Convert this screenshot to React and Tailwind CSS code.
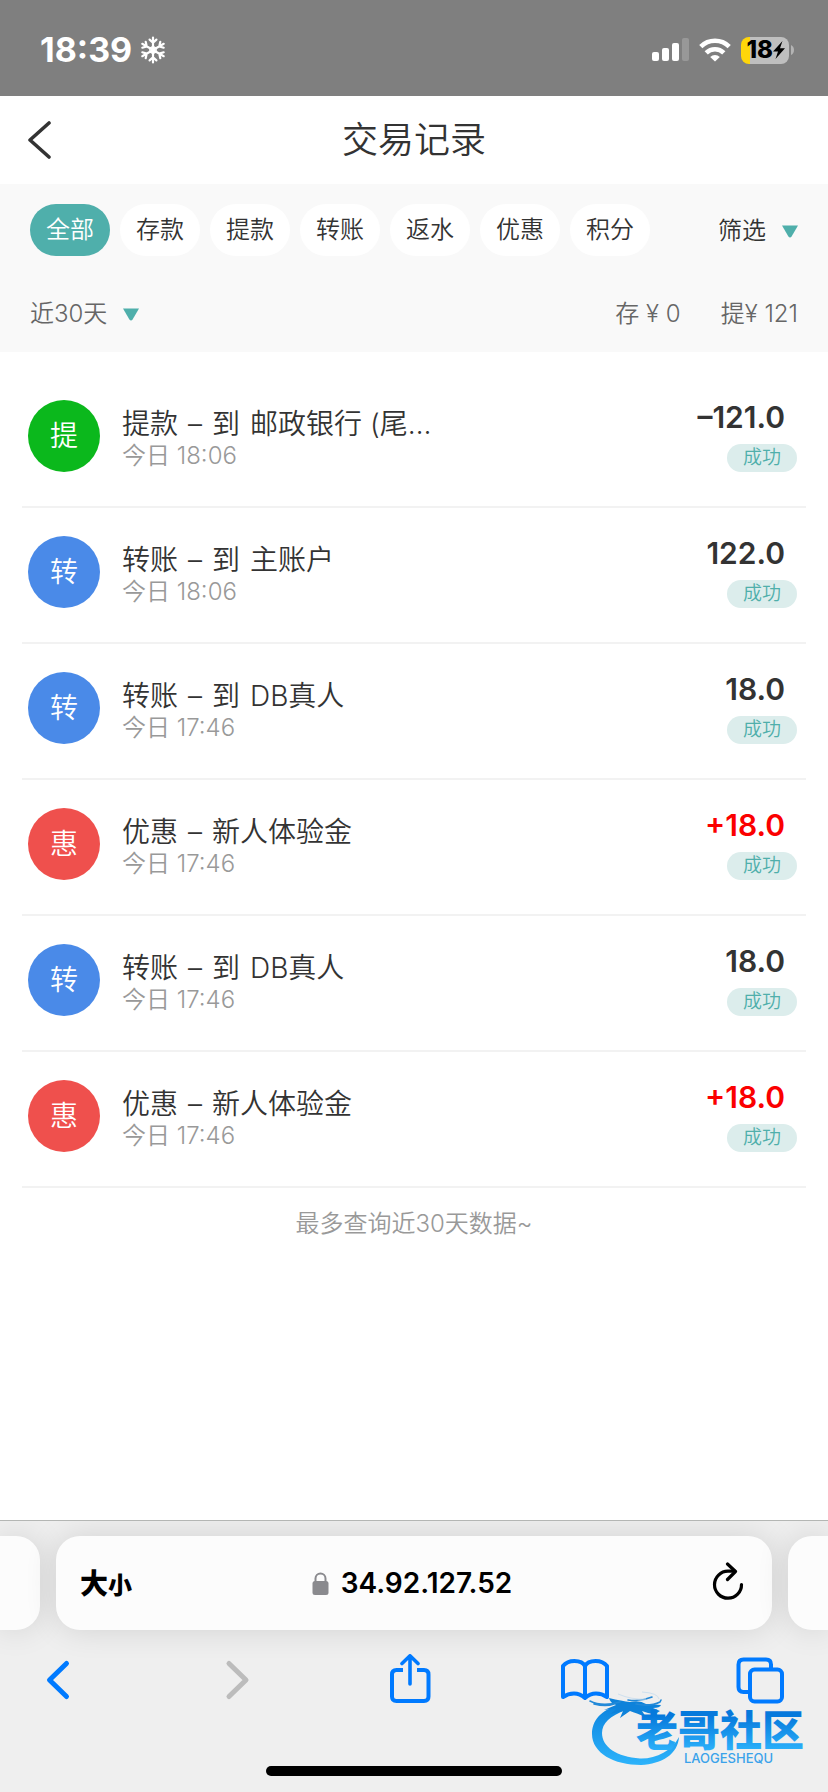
import { useState } from 'react'

const TABS = ['全部', '存款', '提款', '转账', '返水', '优惠', '积分']

const TYPE_CONFIG = {
  withdraw: { badge: 'bg-[#0bb81c]', label: '提' },
  transfer: { badge: 'bg-[#4a8ae8]', label: '转' },
  bonus:    { badge: 'bg-[#ef504d]', label: '惠' },
}

const RECORDS = [
  { id: 1, type: 'withdraw', title: ['提款', '–', '到', '邮政银行 (尾…'], time: '今日 18:06', amount: '–121.0' },
  { id: 2, type: 'transfer', title: ['转账', '–', '到', '主账户'],        time: '今日 18:06', amount: '122.0' },
  { id: 3, type: 'transfer', title: ['转账', '–', '到', 'DB真人'],        time: '今日 17:46', amount: '18.0' },
  { id: 4, type: 'bonus',    title: ['优惠', '–', '新人体验金'],          time: '今日 17:46', amount: '+18.0' },
  { id: 5, type: 'transfer', title: ['转账', '–', '到', 'DB真人'],        time: '今日 17:46', amount: '18.0' },
  { id: 6, type: 'bonus',    title: ['优惠', '–', '新人体验金'],          time: '今日 17:46', amount: '+18.0' },
]

function Caret() {
  return (
    <svg width="16" height="13" viewBox="0 0 16 13" className="shrink-0">
      <path d="M0 0.5H16L9.6 11.4Q8 13.6 6.4 11.4Z" fill="#4fafab" />
    </svg>
  )
}

function Snowflake() {
  return (
    <svg width="26" height="28" viewBox="-13 -14 26 28" fill="none" stroke="#fff" strokeWidth="2.2" strokeLinecap="round" strokeLinejoin="round">
      {[0, 60, 120, 180, 240, 300].map((deg) => (
        <path key={deg} d="M0 0V-12.4M-3.4 -10.4L0 -7.2L3.4 -10.4" transform={`rotate(${deg})`} />
      ))}
      <path d="M0 -3.6L3.1 -1.8V1.8L0 3.6L-3.1 1.8V-1.8Z" strokeWidth="1.4" />
    </svg>
  )
}

function StatusBar() {
  return (
    <div className="flex h-24 items-center justify-between bg-[#7f7f7f] pr-[34px] pl-10 pt-1 text-white">
      <div className="flex items-center gap-2">
        <span className="text-[34px] leading-10 font-bold">18:39</span>
        <Snowflake />
      </div>
      <div className="flex items-center gap-[10px]">
        <svg width="37" height="24" viewBox="0 0 37 24" fill="#fff">
          <rect x="0" y="14" width="7" height="9" rx="2" />
          <rect x="10" y="10" width="7" height="13" rx="2" />
          <rect x="20" y="5" width="7" height="18" rx="2" />
          <rect x="30" y="0" width="7" height="23" rx="2" opacity="0.2" />
        </svg>
        <svg width="32" height="24" viewBox="0 0 32 24" fill="none" stroke="#fff" strokeWidth="4.6">
          <path d="M1.8 8.6A20.3 20.3 0 0 1 30.2 8.6" />
          <path d="M7.2 14.8A12.6 12.6 0 0 1 24.8 14.8" />
          <path d="M16 23.6L11.2 19A7 7 0 0 1 20.8 19Z" fill="#fff" stroke="none" />
        </svg>
        <div className="flex items-center gap-[2px]">
          <div className="flex h-[27px] w-12 items-center justify-end overflow-hidden rounded-lg bg-linear-to-r from-[#ffd60a] from-[19%] to-[#bfbfbf] to-[19%] pr-1 text-black">
            <span className="text-2xl leading-7 font-extrabold">18</span>
            <svg width="12" height="18" viewBox="0 0 12 18">
              <path d="M9.5 0L0 10.5H5L2.5 18L12 7.2H7Z" fill="#000" />
            </svg>
          </div>
          <svg width="3" height="10" viewBox="0 0 3 10">
            <path d="M0 0Q3 1.5 3 5T0 10Z" fill="#b4b4b4" />
          </svg>
        </div>
      </div>
    </div>
  )
}

function RecordRow({ record }) {
  const cfg = TYPE_CONFIG[record.type]
  return (
    <li className="flex h-[136px] items-start border-b-2 border-[#f2f2f2] px-[6px] pt-7">
      <span className={`flex size-[72px] shrink-0 items-center justify-center rounded-full text-[28px] leading-8 text-white ${cfg.badge}`}>
        {cfg.label}
      </span>
      <div className="ml-[22px] min-w-0 flex-1 pt-2">
        <div className="flex gap-[10px] text-[28px] leading-8 whitespace-nowrap text-[#333]">
          {record.title.map((part) => (
            <span key={part}>{part}</span>
          ))}
        </div>
        <div className="text-2xl leading-8 text-[#999]">{record.time}</div>
      </div>
      <div className="flex flex-col items-end pt-px pr-[3px]">
        <div className={`pr-3 text-[30px] leading-8 font-semibold ${record.type === 'bonus' ? 'text-[#fb0000]' : 'text-[#333]'}`}>
          {record.amount}
        </div>
        <div className="mt-[11px] flex h-7 w-[70px] items-center justify-center rounded-full bg-[#dcedec] text-[19px] leading-7 text-[#4fafab]">
          成功
        </div>
      </div>
    </li>
  )
}

function CommunityLogo() {
  return (
    <svg width="248" height="112" viewBox="0 0 248 112" className="pointer-events-none absolute right-0 bottom-0">
      <defs>
        <linearGradient id="ring" gradientUnits="userSpaceOnUse" x1="0" y1="20" x2="0" y2="86">
          <stop offset="0" stopColor="#0a7fdc" />
          <stop offset="1" stopColor="#2db4fb" />
        </linearGradient>
        <linearGradient id="word" gradientUnits="userSpaceOnUse" x1="0" y1="36" x2="0" y2="70">
          <stop offset="0" stopColor="#0679dc" />
          <stop offset="1" stopColor="#2bb0fa" />
        </linearGradient>
      </defs>
      <path
        d="M40 25C20 30 12 41 12 54C12 73 34 85 61 85C82 84 98 74 99 57C92 71 76 79 60 78.5C37 77 22 67 22 53C22 43 30 36 46 30Z"
        fill="url(#ring)"
      />
      <path
        d="M29 18Q42 21 50 22Q60 20 66 24L81 25Q80 28 73 28L80 31Q76 35 68 33L62 31L66 37Q56 33 50 31L40 38L43 31L30 34L38 28L24 30L36 25Q30 23 29 18Z"
        fill="#0e82da"
      />
      <path
        d="M10 21Q22 27 40 22M14 24Q26 27 34 24M48 20Q60 22 72 17M56 24Q70 27 80 22L81 20"
        fill="none" stroke="#2289d8" strokeWidth="1.6" strokeLinecap="round"
      />
      <path d="M38 14Q52 20 66 19M62 12Q78 13 79 19" fill="none" stroke="#cfe0ee" strokeWidth="1" />
      <text x="56" y="66" fontSize="42" fontWeight="900" fill="url(#word)" className="font-['Noto_Sans_CJK_SC',sans-serif]">
        老哥社区
      </text>
      <text x="104" y="83" fontSize="13" fontWeight="500" fill="#3aa2ea" className="font-[Inter,sans-serif]">
        LAOGESHEQU
      </text>
    </svg>
  )
}

function BrowserBar() {
  return (
    <div className="relative mt-auto overflow-hidden border-t border-[#b4b6b4] bg-[#efefef] pt-[15px] pb-4 text-black">
      <div className="flex h-[94px] gap-4">
        <div className="w-10 rounded-r-3xl bg-[#fcfcfc] shadow-[0_0_32px_rgba(0,0,0,0.12)]" />
        <div className="flex flex-1 items-center justify-between rounded-3xl bg-[#fcfcfc] pr-7 pl-6 shadow-[0_0_32px_rgba(0,0,0,0.12)]">
          <button type="button" className="flex w-14 items-baseline pt-1 font-black">
            <span className="text-[28px] leading-8">大</span>
            <span className="text-2xl leading-8">小</span>
          </button>
          <div className="flex items-center gap-3">
            <svg width="17" height="23" viewBox="0 0 17 23">
              <rect x="0.5" y="9" width="16" height="14" rx="2.5" fill="#8a8a8e" />
              <path d="M3.5 10V6.5A5 5 0 0 1 13.5 6.5V10" fill="none" stroke="#8a8a8e" strokeWidth="2" />
            </svg>
            <span className="text-[28px] leading-8 font-semibold">34.92.127.52</span>
          </div>
          <button type="button" aria-label="刷新" className="flex w-14 justify-end">
            <svg width="32" height="42" viewBox="0 0 32 42" fill="none" stroke="#000" strokeWidth="3.2" strokeLinecap="round" strokeLinejoin="round">
              <path d="M22.5 9.2H16.2A13.5 13.5 0 1 0 29.500 22.500" />
              <path d="M15.5 2L23.5 9.5L15.5 17.5" />
            </svg>
          </button>
        </div>
        <div className="w-10 rounded-l-3xl bg-[#fcfcfc] shadow-[0_0_32px_rgba(0,0,0,0.12)]" />
      </div>

      <div className="mt-6 flex justify-between pr-[42px] pl-8">
        <button type="button" aria-label="后退">
          <svg width="52" height="52" viewBox="0 0 52 52" fill="none" stroke="#007aff" strokeWidth="5" strokeLinecap="round" strokeLinejoin="round">
            <path d="M34.5 9.5L17.5 26L34.5 42.5" />
          </svg>
        </button>
        <button type="button" aria-label="前进">
          <svg width="52" height="52" viewBox="0 0 52 52" fill="none" stroke="#bcbcbc" strokeWidth="5" strokeLinecap="round" strokeLinejoin="round">
            <path d="M21 9.5L38 26L21 42.5" />
          </svg>
        </button>
        <button type="button" aria-label="分享">
          <svg width="52" height="52" viewBox="0 0 52 52" fill="none" stroke="#007aff" strokeWidth="4" strokeLinecap="round" strokeLinejoin="round">
            <path d="M20 16H13.5Q9 16 9 20.5V42.5Q9 47 13.5 47H41Q45.5 47 45.5 42.5V20.5Q45.5 16 41 16H34" strokeLinecap="butt" />
            <path d="M27 30V3M19 9.5L27 1.8L35 9.5" strokeWidth="3.6" />
          </svg>
        </button>
        <button type="button" aria-label="书签">
          <svg width="52" height="52" viewBox="0 0 52 52" fill="none" stroke="#007aff" strokeWidth="4" strokeLinecap="round" strokeLinejoin="round">
            <path d="M26 12Q23.5 7 15.5 7Q8 7 4 12V43Q9 39.5 15 39.5T26 44Q31 39.5 37 39.5T48 43V12Q44 7 36.5 7Q28.5 7 26 12V43" />
          </svg>
        </button>
        <button type="button" aria-label="标签页">
          <svg width="52" height="52" viewBox="0 0 52 52" fill="none" stroke="#007aff" strokeWidth="4" strokeLinejoin="round">
            <path d="M14 38H9.5Q4.5 38 4.5 33V10.5Q4.5 5.5 9.5 5.5H32Q37 5.5 37 10.5V14" />
            <rect x="16" y="15.5" width="32" height="32" rx="4.5" />
          </svg>
        </button>
      </div>

      <div className="mx-auto mt-[60px] h-[10px] w-[296px] rounded-full bg-black" />
      <CommunityLogo />
    </div>
  )
}

export default function App() {
  const [tab, setTab] = useState('全部')

  return (
    <div className="flex min-h-screen flex-col bg-white font-[Inter,'Noto_Sans_CJK_SC',sans-serif] font-[350] text-[#333]">
      <StatusBar />

      <header className="grid h-[88px] grid-cols-[1fr_auto_1fr] items-center px-7">
        <button type="button" aria-label="返回" className="justify-self-start">
          <svg width="24" height="40" viewBox="0 0 24 40" fill="none" stroke="#333" strokeWidth="3.6" strokeLinecap="round" strokeLinejoin="round">
            <path d="M21 3L2 20L21 37" />
          </svg>
        </button>
        <h1 className="text-4xl leading-10 font-[350]">交易记录</h1>
      </header>

      <section className="bg-[#f9f9f9] px-[30px] pt-5">
        <div className="flex items-center justify-between">
          <div className="flex gap-[10px]">
            {TABS.map((name) => (
              <button
                key={name}
                type="button"
                onClick={() => setTab(name)}
                className={`h-[52px] w-20 rounded-full text-2xl leading-8 ${
                  tab === name ? 'bg-[#4fafab] text-white' : 'bg-white text-[#333]'
                }`}
              >
                {name}
              </button>
            ))}
          </div>
          <button type="button" className="flex items-center gap-4 pt-[2px] text-2xl leading-8">
            筛选
            <Caret />
          </button>
        </div>
        <div className="flex h-24 items-center justify-between pt-5 text-2xl leading-8 text-[#666]">
          <button type="button" className="flex items-center gap-4">
            近30天
            <Caret />
          </button>
          <div className="flex gap-10">
            <span>存 ¥ 0</span>
            <span>提¥ 121</span>
          </div>
        </div>
      </section>

      <ul className="px-[22px] pt-5">
        {RECORDS.map((record) => (
          <RecordRow key={record.id} record={record} />
        ))}
      </ul>
      <p className="py-5 text-center text-2xl leading-8 text-[#999]">最多查询近30天数据~</p>

      <BrowserBar />
    </div>
  )
}
